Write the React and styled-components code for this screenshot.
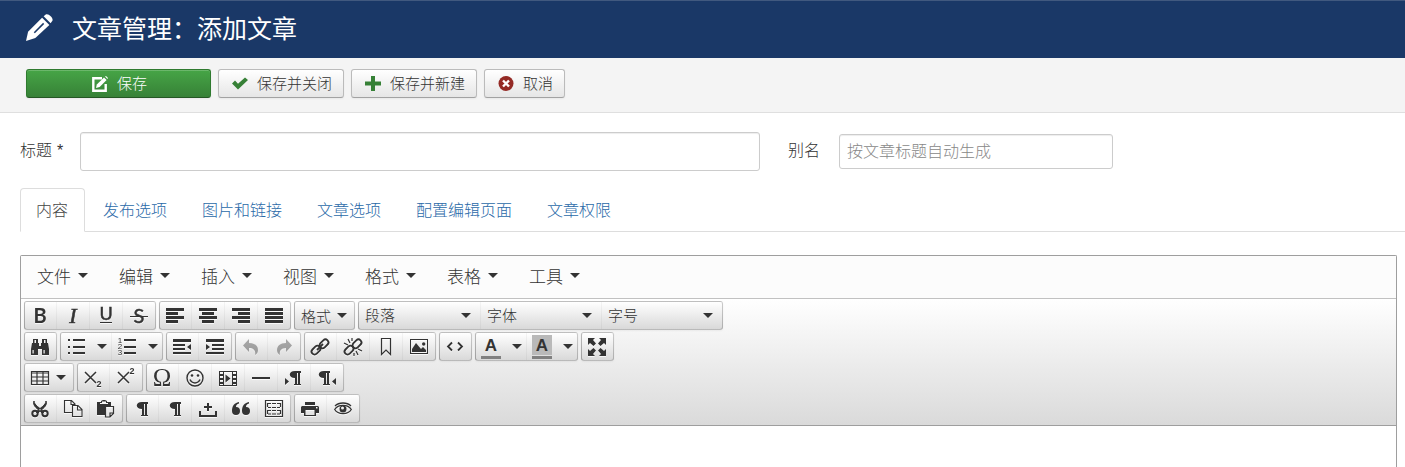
import React from 'react';
import styled, { createGlobalStyle } from 'styled-components';

const colors = {
  navy: '#1a3867',
  text: '#333',
  link: '#2a69a8',
  green: '#378137',
  red: '#942a25',
  line: '#ddd',
  input: '#ccc',
  frame: '#9e9e9e',
}

const sans = '"Liberation Sans", "Noto Sans CJK SC", sans-serif'

const GlobalStyle = createGlobalStyle`
  * { box-sizing: border-box; }
  body {
    margin: 0;
    background: #fff;
    color: ${colors.text};
    font-family: ${sans};
    font-size: 16px;
    font-weight: 300;
  }
  button, input, select, textarea {
    font-family: inherit;
    font-weight: inherit;
  }
`

/* ---------- page ---------- */

const Page = styled.div`
  display: flex;
  flex-direction: column;
  min-height: 100vh;
`

const Header = styled.header`
  display: flex;
  align-items: center;
  gap: 19px;
  height: 58px;
  padding: 0 26px 2px;
  color: #fff;
  background: ${colors.navy};
  border-top: 1px solid #41597f;
`

const Title = styled.h1`
  margin: 0;
  font-size: 25px;
  line-height: 36px;
  font-weight: 400;
`

const Actions = styled.div`
  display: flex;
  flex-wrap: wrap;
  gap: 7px;
  padding: 11px 26px 14px;
  background: #f4f4f4;
  border-bottom: 1px solid #dfdfdf;
`

const ActionButton = styled.button`
  display: flex;
  align-items: center;
  justify-content: center;
  gap: 9px;
  height: 29px;
  min-width: ${({ $primary }) => ($primary ? '185px' : '0')};
  padding: 0 11px 0 13px;
  font-size: 15px;
  line-height: 20px;
  color: ${({ $primary }) => ($primary ? '#fff' : colors.text)};
  background: ${({ $primary }) => ($primary
    ? 'linear-gradient(#46a546, #378137)'
    : 'linear-gradient(#fff, #e6e6e6)')};
  border: 1px solid;
  border-color: ${({ $primary }) => ($primary
    ? '#2f7a2f #2f7a2f #245724'
    : '#bbb #bbb #a2a2a2')};
  border-radius: 3px;
  box-shadow: inset 0 1px 0 rgba(255, 255, 255, .2), 0 1px 2px rgba(0, 0, 0, .05);
  cursor: pointer;
`

const Fields = styled.div`
  display: flex;
  align-items: center;
  padding: 19px 20px 17px;
`

const Label = styled.label`
  flex: none;
  width: ${({ $width }) => $width};
  margin-left: ${({ $offset }) => $offset || '0'};
  padding-bottom: 2px;
  line-height: 20px;
`

const Star = styled.span`
  margin-left: 5px;
`

const TextInput = styled.input`
  flex: 0 1 ${({ $width }) => $width};
  min-width: 0;
  height: ${({ $large }) => ($large ? '39px' : '35px')};
  padding: 0 7px;
  font-size: 16px;
  color: #555;
  background: #fff;
  border: 1px solid ${colors.input};
  border-radius: 3px;
  box-shadow: inset 0 1px 1px rgba(0, 0, 0, .075);

  &::placeholder {
    color: #888;
    opacity: 1;
  }
`

const Tabs = styled.nav`
  display: flex;
  gap: 2px;
  margin: 0 0 23px 20px;
  border-bottom: 1px solid ${colors.line};
`

const Tab = styled.a`
  height: 44px;
  margin-bottom: -1px;
  padding: 0 16px 0 15px;
  line-height: 43px;
  color: ${({ $active }) => ($active ? '#444' : colors.link)};
  text-decoration: none;
  background: ${({ $active }) => ($active ? '#fff' : 'none')};
  border: 1px solid ${({ $active }) => ($active ? colors.line : 'transparent')};
  border-bottom-color: ${({ $active }) => ($active ? '#fff' : 'transparent')};
  border-radius: 4px 4px 0 0;
`

/* ---------- editor ---------- */

const Editor = styled.section`
  display: flex;
  flex: 1;
  flex-direction: column;
  margin: 0 8px 0 20px;
  border: 1px solid ${colors.frame};
  border-bottom: 0;
  border-radius: 2px 2px 0 0;
`

const MenuBar = styled.div`
  display: flex;
  height: 43px;
  background: #fcfcfc;
  border-bottom: 1px solid #c1c1c1;
`

const MenuButton = styled.button`
  display: flex;
  align-items: center;
  gap: 7px;
  padding: 0 15px 3px 16px;
  font-size: 17px;
  color: ${colors.text};
  background: none;
  border: 0;
`

const Caret = styled.span`
  flex: none;
  border: 5px solid transparent;
  border-top-color: ${colors.text};
  border-bottom: 0;
`

const Panel = styled.div`
  display: flex;
  flex-direction: column;
  gap: 2px;
  padding: 2px 3px;
  background: linear-gradient(#fff, #dadada);
  border-bottom: 1px solid ${colors.frame};
`

const Row = styled.div`
  display: flex;
  gap: 3px;
`

const Group = styled.div`
  display: flex;
  height: 29px;
  background: linear-gradient(#fff, #d9d9d9);
  border: 1px solid;
  border-color: rgba(0, 0, 0, .12) rgba(0, 0, 0, .2) rgba(0, 0, 0, .27) rgba(0, 0, 0, .27);
  border-radius: 3px;
  box-shadow: 0 1px 2px rgba(0, 0, 0, .05);

  && > * + * {
    border-left: 1px solid rgba(0, 0, 0, .04);
  }
`

const Split = styled.div`
  display: flex;
`

const Tool = styled.button`
  display: flex;
  align-items: center;
  justify-content: center;
  gap: ${({ $text }) => ($text ? '6px' : '7px')};
  padding: 0 7px 0 6px;
  font-size: 15px;
  color: ${colors.text};
  background: none;
  border: 0;

  &:disabled > svg {
    opacity: .4;
  }

  * + & {
    padding-left: 7px;
  }
`

const CaretTool = styled.button`
  display: flex;
  align-items: center;
  justify-content: center;
  width: 19px;
  padding: 0;
  background: none;
  border: 0;
`

const ListBox = styled.div`
  display: grid;
  align-items: center;
  width: 121px;

  & > * {
    grid-area: 1 / 1;
  }

  & > ${Caret} {
    justify-self: end;
    margin-right: 9px;
    pointer-events: none;
  }
`

const Select = styled.select`
  width: 100%;
  height: 100%;
  padding: 0 24px 0 6px;
  font-size: 15px;
  color: ${colors.text};
  background: none;
  border: 0;
  appearance: none;
`

const Glyph = styled.svg`
  display: block;
  overflow: visible;
  width: 18px;
  height: 18px;
  fill: currentColor;
  filter: drop-shadow(0 1px 0 rgba(255, 255, 255, .75));
`

const Swatch = styled.span`
  width: 20px;
  height: 24px;
  margin: 0 -1px;
  font-size: 17px;
  line-height: 21px;
  font-weight: 700;
  background: ${({ $fill }) => ($fill ? 'linear-gradient(#b9b9b9, #b9b9b9) 0 0 / 100% 20px no-repeat' : 'none')};
  border-bottom: 3px solid #808080;
`

const Content = styled.textarea`
  display: block;
  flex: 1;
  width: 100%;
  min-height: 41px;
  padding: 8px;
  font-size: 16px;
  border: 0;
  outline: 0;
  resize: none;
`

/* ---------- icons ---------- */

const ActionIcon = styled.svg`
  flex: none;
  width: 16px;
  height: 16px;
`

const line = { fill: 'none', stroke: 'currentColor', strokeWidth: 1.5 }
const serif = 'Liberation Serif'

const Bars = ({ boxes }) => boxes.map(([x, w], i) => (
  <rect key={i} x={x} y={1 + i * 4} width={w} height="3" />
))

const pilcrow = (x) => (
  <>
    <path d={`M${x + 6} 2v2h-1v11h1v1h-4v-1h1V4h-1v11h1v1h-4v-1h1V9c-7 0-7-7 0-7z`} />
  </>
)

const chain = (
  <>
    <rect x="8" y="2.800" width="10" height="6" rx="3" transform="rotate(-45 13 5.800)" {...line} strokeWidth="1.800" />
    <rect x="0" y="9.200" width="10" height="6" rx="3" transform="rotate(-45 5 12.200)" {...line} strokeWidth="1.800" />
  </>
)

const icons = {
  bold: <text x="9" y="16" textAnchor="middle" fontSize="20" fontWeight="700" fontFamily="Lato">B</text>,
  italic: <text x="9" y="16" textAnchor="middle" fontSize="22" fontStyle="italic" fontFamily={serif} stroke="currentColor" strokeWidth=".6">I</text>,
  underline: (
    <>
      <text x="9" y="13" textAnchor="middle" fontSize="18" fontWeight="400" fontFamily="Lato" stroke="currentColor" strokeWidth=".5">U</text>
      <rect x="3" y="15" width="12" height="1" />
    </>
  ),
  strike: (
    <>
      <text x="9" y="16" textAnchor="middle" fontSize="20" fontWeight="400" fontFamily="Lato" stroke="currentColor" strokeWidth=".5">S</text>
      <rect x="0" y="9" width="18" height="1" />
    </>
  ),
  left: <Bars boxes={[[0, 18], [0, 12], [0, 18], [0, 12]]} />,
  center: <Bars boxes={[[0, 18], [3, 12], [0, 18], [3, 12]]} />,
  right: <Bars boxes={[[0, 18], [6, 12], [0, 18], [6, 12]]} />,
  justify: <Bars boxes={[[0, 18], [0, 18], [0, 18], [0, 18]]} />,
  search: (
    <>
      <path d="M2 1h5v4h1v3h2V5h1V1h5v4h1l1 6v6h-7v-6H7v6H0v-6l1-6h1z" />
      <path d="M1.500 12h1.200v3.600H1.500zM12.500 12h1.200v3.600h-1.200zM3.500 2H5v3H3.500zM13 2h1.500v3H13z" fill="#f4f4f4" />
    </>
  ),
  bullist: <path d="M6 1h12v2H6zM6 8h12v2H6zM6 14h12v2H6zM1 1h2v2H1zM1 8h2v2H1zM1 14h2v2H1z" />,
  numlist: (
    <>
      <path d="M6 1h12v2H6zM6 8h12v2H6zM6 14h12v2H6z" />
      <g fontSize="8" fontWeight="400" fontFamily="Liberation Sans" textAnchor="middle">
        <text x="2" y="5">1</text>
        <text x="2" y="11">2</text>
        <text x="2" y="17">3</text>
      </g>
    </>
  ),
  outdent: <path d="M0 1h18v3H0zM0 6h12v2H0zM0 10h12v2H0zM0 14h18v2H0zM18 6v6l-4-3z" />,
  indent: <path d="M0 1h18v3H0zM6 6h12v2H6zM6 10h12v2H6zM0 14h18v2H0zM0 6v6l4-3z" />,
  undo: <path d="M7 1v4c6 0 9 3 9 7 0 2-1 4-3 5 1-4-1-7-6-7v4L1 7.500z" />,
  redo: <path d="M11 1v4C5 5 2 8 2 12c0 2 1 4 3 5-1-4 1-7 6-7v4l6-6.500z" />,
  link: (
    <>
      {chain}
      <path d="M6 12l6-6" {...line} strokeWidth="1.800" />
    </>
  ),
  unlink: (
    <>
      {chain}
      <path d="M4 1l2 4M0 5l4 2M8 0v3M14 17l-2-4M18 13l-4-2M10 18v-3" {...line} strokeWidth="1.200" />
    </>
  ),
  anchor: <path d="M4.500.500h9v16L9 12l-4.500 4.500z" {...line} strokeWidth="1.200" />,
  image: <path fillRule="evenodd" d="M0 1h18v15H0zM1 2v13h16V2zM2 14v-3l4-6 5 6 2-2 3 3v2zM12 6a1.700 1.700 0 1 0 3.400 0 1.700 1.700 0 1 0-3.400 0z" />,
  code: <path d="M6 4.500L2 8.500l4 4M12 4.500l4 4-4 4" {...line} strokeWidth="1.800" />,
  fullscreen: <path d="M0 0h7L5 2l3 3.500L5.500 8 2 5 0 7zM18 0v7l-2-2-3.500 3L10 5.500 13 2l-2-2zM0 18v-7l2 2 3.500-3L8 12.500 5 16l2 2zM18 18h-7l2-2-3-3.500 2.500-2.500 3.500 3 2-2z" />,
  table: <path d="M.500 2.500h17v13H.500zM.500 4h17M.500 8h17M.500 12h17M6 3v13M12 3v13" {...line} strokeWidth="1.200" />,
  sub: (
    <>
      <path d="M1 3l11 11M12 3L1 14" {...line} />
      <text x="15" y="18" textAnchor="middle" fontSize="9" fontWeight="700" fontFamily="Liberation Sans">2</text>
    </>
  ),
  sup: (
    <>
      <path d="M1 3l11 11M12 3L1 14" {...line} />
      <text x="15" y="5" textAnchor="middle" fontSize="9" fontWeight="700" fontFamily="Liberation Sans">2</text>
    </>
  ),
  omega: <text x="9" y="17" textAnchor="middle" fontSize="25" fontFamily={serif}>Ω</text>,
  smile: (
    <>
      <circle cx="9" cy="9" r="8" {...line} strokeWidth="1.400" />
      <circle cx="6" cy="6.500" r="1.300" />
      <circle cx="12" cy="6.500" r="1.300" />
      <path d="M4 10.500c2 4.500 8 4.500 10 0" {...line} />
    </>
  ),
  media: <path fillRule="evenodd" d="M0 2h18v15H0zM5 3v13h8V3zM1 3v2h3V3zM1 7v2h3V7zM1 11v2h3v-2zM1 15v1h3v-1zM14 3v2h3V3zM14 7v2h3V7zM14 11v2h3v-2zM14 15v1h3v-1zM6.500 5.500v8l5-4z" />,
  rule: <path d="M0 8h18v2H0z" />,
  ltr: (
    <>
      {pilcrow(10)}
      <path d="M0 9v7l4-3.500z" />
    </>
  ),
  rtl: (
    <>
      {pilcrow(6)}
      <path d="M18 9v7l-4-3.500z" />
    </>
  ),
  cut: (
    <>
      <path d="M3 1c0 4 6 7 10 11l-2 1C7 9 1 6 3 1zM15 1c0 4-6 7-10 11l2 1c4-4 10-7 8-12z" stroke="currentColor" />
      <circle cx="4" cy="13.500" r="2.700" {...line} strokeWidth="2" />
      <circle cx="14" cy="13.500" r="2.700" {...line} strokeWidth="2" />
    </>
  ),
  copy: <path d="M8 12.500H.500v-12h7L11 4v2M7 1v3.500h4M8.500 5.500H14l4 4v7H8.500zM13.500 6v4H18" {...line} strokeWidth="1.100" />,
  paste: (
    <>
      <path d="M0 2h4V1l2-1h2l2 1v1h4v4H8v9H0zM3 4h8V3H9V1.500H5V3H3z" fillRule="evenodd" />
      <path d="M8.500 6.500h8v7l-3.500 3.500H8.500zM17 13h-4v4" {...line} strokeWidth="1.200" />
    </>
  ),
  pilcrow: pilcrow(9),
  nbsp: <path d="M0 11h2v4h14v-4h2v6H0zM8 3h2v3h3v2h-3v3H8V8H5V6h3z" />,
  quote: <path d="M7 2C2 3 0 6 0 11a4 4 0 1 0 4-4C4 5 5 4 7 3.500zM17 2c-5 1-7 4-7 9a4 4 0 1 0 4-4c0-2 1-3 3-3.500z" />,
  template: (
    <>
      <path d="M.500.500h17v16H.500z" {...line} strokeWidth="1.200" />
      <path d="M3 3.500h3M7 3.500h4M12 3.500h3.500V7M2.500 3v4M3 7.500h3M7 7.500h4M12 7.500h3M3 10.500h3M7 10.500h4M12 10.500h3.500V14M2.500 10v4M3 14h3M7 14h4M12 14h3" {...line} strokeWidth="1.200" />
    </>
  ),
  print: <path fillRule="evenodd" d="M4 2h10v3H4zM1 6h16l1 1v6h-3v3H3v-3H0V7zM4.500 10v5h9v-5zM15 7v1.500h1.500V7z" />,
  preview: (
    <>
      <path d="M.700 9.500C4 4 14 4 17.300 9.500 14 15 4 15 .700 9.500zM1 6C5 2 13 2 17 6" {...line} strokeWidth="1.300" />
      <path fillRule="evenodd" d="M5.500 9a3.500 3.500 0 1 0 7 0 3.500 3.500 0 1 0-7 0zM7 8a1.500 1.500 0 1 0 3 0 1.500 1.500 0 1 0-3 0z" />
    </>
  ),
}

const Icon = ({ name }) => <Glyph viewBox="0 0 18 18" aria-hidden="true">{icons[name]}</Glyph>

const PencilIcon = styled(({ className }) => (
  <svg className={className} viewBox="0 0 26 26" aria-hidden="true">
    <path fill="#fff" d="M0 26l2-9L15.500 3.500l7 7L9 23z" />
    <path fill="#fff" d="M17 2.200L19 .600c2.500-1.800 8 3.700 6.300 6.200L23.700 9z" />
    <path stroke={colors.navy} strokeWidth="1.500" d="M8 18L17 9" />
  </svg>
))`
  width: 27px;
  height: 27px;
  margin-top: -2px;
`

const SaveIcon = () => (
  <ActionIcon viewBox="0 0 16 16" aria-hidden="true">
    <path d="M10 2.300H1.300v12.400h12.400V8" fill="none" stroke="#fff" strokeWidth="2.400" />
    <path d="M4 12l.8-3.500L12 1.500 14.600 4l-7 7z" fill="#fff" />
    <path d="M13 .600l1-.600 2 2-.600 1z" fill="#fff" />
  </ActionIcon>
)

const CheckIcon = () => (
  <ActionIcon viewBox="0 0 16 16" aria-hidden="true">
    <path d="M0 7.500L3 4.500l3 3.300L13 1.500 16 4 6 13.500z" fill={colors.green} />
  </ActionIcon>
)

const PlusIcon = () => (
  <ActionIcon viewBox="0 0 16 16" aria-hidden="true">
    <path d="M6 0h4v5.500h6v4h-6V15H6V9.500H0v-4h6z" fill={colors.green} />
  </ActionIcon>
)

const CancelIcon = () => (
  <ActionIcon viewBox="0 0 16 16" aria-hidden="true">
    <circle cx="8" cy="7.500" r="7.500" fill={colors.red} />
    <path d="M5 4.500l6 6M11 4.500l-6 6" stroke="#fff" strokeWidth="2.400" />
  </ActionIcon>
)

/* ---------- parts ---------- */

const Tools = ({ names, disabled }) => (
  <Group>
    {names.map(([name, title], i) => (
      <Tool key={i} type="button" aria-label={title} title={title} disabled={disabled}>
        <Icon name={name} />
      </Tool>
    ))}
  </Group>
)

const SplitTool = ({ label, children }) => (
  <Split>
    <Tool type="button" aria-label={label}>{children}</Tool>
    <CaretTool type="button" aria-label={`${label}选项`}><Caret /></CaretTool>
  </Split>
)

const lists = ['段落', '字体', '字号']
const menus = ['文件', '编辑', '插入', '视图', '格式', '表格', '工具']
const tabs = ['内容', '发布选项', '图片和链接', '文章选项', '配置编辑页面', '文章权限']

const Toolbars = () => (
  <Panel>
    <Row>
      <Tools names={[['bold', '粗体'], ['italic', '斜体'], ['underline', '下划线'], ['strike', '删除线']]} />
      <Tools names={[['left', '左对齐'], ['center', '居中'], ['right', '右对齐'], ['justify', '两端对齐']]} />
      <Group>
        <Tool type="button" $text>格式<Caret /></Tool>
      </Group>
      <Group>
        {lists.map(name => (
          <ListBox key={name}>
            <Select aria-label={name}><option>{name}</option></Select>
            <Caret />
          </ListBox>
        ))}
      </Group>
    </Row>
    <Row>
      <Tools names={[['search', '查找和替换']]} />
      <Group>
        <SplitTool label="项目符号"><Icon name="bullist" /></SplitTool>
        <SplitTool label="编号列表"><Icon name="numlist" /></SplitTool>
      </Group>
      <Tools names={[['outdent', '减少缩进'], ['indent', '增加缩进']]} />
      <Tools disabled names={[['undo', '撤销'], ['redo', '重做']]} />
      <Tools names={[['link', '插入链接'], ['unlink', '取消链接'], ['anchor', '锚点'], ['image', '图片']]} />
      <Tools names={[['code', '源代码']]} />
      <Group>
        <SplitTool label="文字颜色"><Swatch>A</Swatch></SplitTool>
        <SplitTool label="背景颜色"><Swatch $fill>A</Swatch></SplitTool>
      </Group>
      <Tools names={[['fullscreen', '全屏']]} />
    </Row>
    <Row>
      <Group>
        <Tool type="button" aria-label="表格"><Icon name="table" /><Caret /></Tool>
      </Group>
      <Tools names={[['sub', '下标'], ['sup', '上标']]} />
      <Tools
        names={[
          ['omega', '特殊字符'], ['smile', '表情'], ['media', '媒体'],
          ['rule', '水平线'], ['ltr', '从左到右'], ['rtl', '从右到左'],
        ]}
      />
    </Row>
    <Row>
      <Tools names={[['cut', '剪切'], ['copy', '复制'], ['paste', '粘贴']]} />
      <Tools
        names={[
          ['pilcrow', '显示段落'], ['pilcrow', '显示区块'], ['nbsp', '不间断空格'],
          ['quote', '引用'], ['template', '模板'],
        ]}
      />
      <Tools names={[['print', '打印'], ['preview', '预览']]} />
    </Row>
  </Panel>
)

export default function App() {
  return (
    <Page>
      <GlobalStyle />
      <Header>
        <PencilIcon />
        <Title>文章管理：添加文章</Title>
      </Header>
      <Actions>
        <ActionButton $primary type="button"><SaveIcon />保存</ActionButton>
        <ActionButton type="button"><CheckIcon />保存并关闭</ActionButton>
        <ActionButton type="button"><PlusIcon />保存并新建</ActionButton>
        <ActionButton type="button"><CancelIcon />取消</ActionButton>
      </Actions>
      <Fields>
        <Label htmlFor="title" $width="60px">标题<Star>*</Star></Label>
        <TextInput id="title" type="text" $width="680px" $large />
        <Label htmlFor="alias" $width="51px" $offset="28px">别名</Label>
        <TextInput id="alias" type="text" $width="274px" placeholder="按文章标题自动生成" />
      </Fields>
      <Tabs>
        {tabs.map((name, i) => (
          <Tab key={name} href="#" $active={i === 0}>{name}</Tab>
        ))}
      </Tabs>
      <Editor>
        <MenuBar>
          {menus.map(name => (
            <MenuButton key={name} type="button">{name}<Caret /></MenuButton>
          ))}
        </MenuBar>
        <Toolbars />
        <Content aria-label="正文" />
      </Editor>
    </Page>
  )
}
